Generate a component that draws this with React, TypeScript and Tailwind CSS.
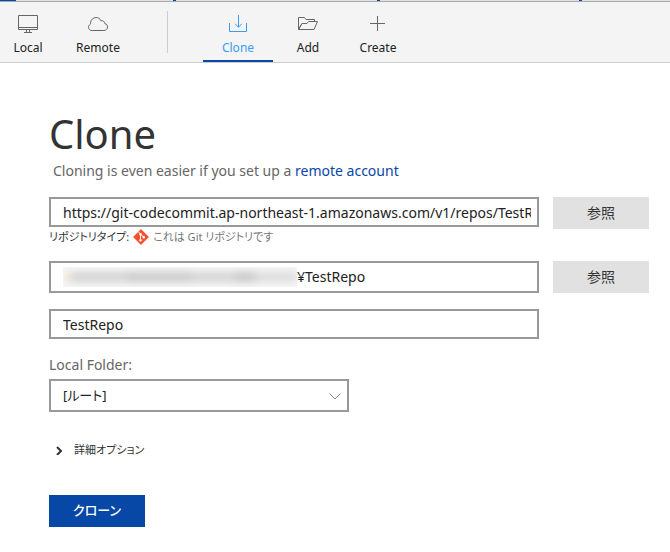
import React from "react";

const field =
  "h-[30px] min-w-0 border-2 border-[#999] bg-white pl-3 pr-1.5 text-sm text-[#222] outline-none";

// proportional kana, as in the desktop UI fonts
const kana = "[font-feature-settings:'palt']";

const icon = {
  fill: "none",
  stroke: "currentColor",
  width: 24,
  height: 24,
  viewBox: "0 0 24 24",
};

const LocalIcon = () => (
  <svg {...icon}>
    <path d="M2.5 3.5h19v14h-19zM2.5 15.5h19M10.5 17.5v2.5M13.5 17.5v2.5M8 20.5h8" />
  </svg>
);

const RemoteIcon = () => (
  <svg {...icon}>
    <path d="M6.2 18.5C3.9 18.5 2.5 17.2 2.5 15.3C2.5 13.8 3.3 12.9 4.2 12.4C4.6 12.1 4.5 11.7 4.5 10.9C4.7 7.7 7.3 5.5 10.2 5.5C12.5 5.5 14.1 6.7 14.8 8.7C17.2 8.5 18.7 9.5 18.9 11.7C20.7 12 21.5 13.3 21.5 15C21.5 17 20 18.5 17.9 18.5Z" />
  </svg>
);

const CloneIcon = () => (
  <svg {...icon}>
    <path d="M3.5 11v8.5h17V11M12.5 3v12M9.3 11.8l3.2 3.5l3.2-3.5" />
  </svg>
);

const AddIcon = () => (
  <svg {...icon}>
    <path d="M2.5 17.5v-12h6l1.5 2h8.5v2M2.5 17.5h15.5l3.5-8h-9l-1.5 2H6zM2.5 17.5l3.5-6" />
  </svg>
);

const CreateIcon = () => (
  <svg {...icon}>
    <path d="M11.5 4v15M4 11.5h15" />
  </svg>
);

const GitIcon = () => (
  <svg width="16" height="16" viewBox="0 0 16 16">
    <path
      d="M8 1l7 7-7 7-7-7z"
      fill="#f4512c"
      stroke="#f4512c"
      strokeWidth="1.4"
      strokeLinejoin="round"
    />
    <path d="M5 2.5l2.5 2.5v6M7.5 5l3.3 3.3" stroke="#fff" fill="none" />
    <circle cx="7.5" cy="5.2" r="1.2" fill="#fff" />
    <circle cx="7.5" cy="11.2" r="1.2" fill="#fff" />
    <circle cx="10.8" cy="8.2" r="1.2" fill="#fff" />
  </svg>
);

type TabProps = {
  label: string;
  active?: boolean;
  children: React.ReactNode;
};

const Tab = ({ label, active, children }: TabProps) => (
  <button
    className={`flex w-[70px] flex-col items-center gap-0.5 border-b-2 pt-2.5 ${
      active ? "border-[#0747a6] text-[#3b9cf5]" : "border-transparent text-[#666]"
    }`}
  >
    {children}
    <span className={`text-xs leading-5 ${active ? "" : "text-[#222]"}`}>
      {label}
    </span>
  </button>
);

const BrowseButton = () => (
  <button className="h-8 w-24 shrink-0 bg-[#e1e1e1] text-sm text-[#333]">
    参照
  </button>
);

const HiddenPath = () => (
  <span className="flex h-5 w-[234px] items-center overflow-hidden bg-[#f8f8f8]">
    <span className="flex h-2.5 w-full blur-xs">
      <span className="w-2 bg-[#f3e6d8]" />
      <span className="w-14 bg-[#d0d0d0]" />
      <span className="w-16 bg-[#c6c6c6]" />
      <span className="w-11 bg-[#d2d2d2]" />
      <span className="w-5 bg-[#c4c4c4]" />
      <span className="flex-1 bg-[#dadada]" />
    </span>
  </span>
);

const App = () => {
  return (
    <div className="bg-white font-['Noto_Sans','Noto_Sans_CJK_JP',sans-serif] text-[#333]">
      <div className="flex h-0.5 border-b border-[#aaa] bg-[#e1e1e1]">
        <span className="w-4 bg-[#0747a6]" />
        <span className="ml-[157px] w-[3px] bg-[#0747a6]" />
        <span className="ml-[201px] w-[3px] bg-[#0747a6]" />
        <span className="ml-[199px] w-[3px] bg-[#0747a6]" />
      </div>
      <nav className="flex h-[61px] border-b border-[#ccc] bg-[#f4f4f4]">
        <div className="-ml-[7px] flex">
          <Tab label="Local">
            <LocalIcon />
          </Tab>
          <Tab label="Remote">
            <RemoteIcon />
          </Tab>
        </div>
        <div className="mr-[35px] ml-[34px] my-[9px] w-px bg-[#ccc]" />
        <Tab label="Clone" active>
          <CloneIcon />
        </Tab>
        <Tab label="Add">
          <AddIcon />
        </Tab>
        <Tab label="Create">
          <CreateIcon />
        </Tab>
      </nav>

      <main className="pt-[45px] pr-[21px] pb-6 pl-[49px]">
        <h1 className="text-[40px] leading-[52px]">Clone</h1>
        <p className="mt-px ml-1 text-sm leading-5 text-[#666]">
          Cloning is even easier if you set up a{" "}
          <a href="#" className="text-[#0747a6]">
            remote account
          </a>
        </p>

        <div className="mt-4 flex gap-3.5">
          <div className="flex min-w-0 flex-1 flex-col">
            <input
              aria-label="Source URL"
              className={field}
              defaultValue="https://git-codecommit.ap-northeast-1.amazonaws.com/v1/repos/TestRepo"
            />
            <p className={`flex h-5 items-center gap-1 text-[11px] ${kana}`}>
              リポジトリタイプ: <GitIcon />
              <span className="text-[#777]">これは Git リポジトリです</span>
            </p>
          </div>
          <BrowseButton />
        </div>

        <div className="mt-3.5 flex gap-3.5">
          <div className="flex h-8 min-w-0 flex-1 items-center overflow-hidden border-2 border-[#999] pl-3">
            <HiddenPath />
            <input
              aria-label="Destination path"
              className="min-w-0 flex-1 text-sm text-[#222] outline-none"
              defaultValue="¥TestRepo"
            />
          </div>
          <BrowseButton />
        </div>

        <div className="mt-4 mr-[110px] flex">
          <input aria-label="Name" className={`${field} flex-1`} defaultValue="TestRepo" />
        </div>

        <label htmlFor="folder" className="mt-4 block text-sm leading-5 text-[#666]">
          Local Folder:
        </label>
        <div className="relative mt-1 w-[300px]">
          <select
            id="folder"
            className={`h-[33px] w-full appearance-none border-2 border-[#999] bg-white px-3 text-[13px] text-[#222] ${kana}`}
          >
            <option>[ルート]</option>
          </select>
          <svg
            className="pointer-events-none absolute top-3.5 right-2"
            width="12"
            height="8"
            fill="none"
            stroke="#888"
          >
            <path d="M.5 .5L6 6L11.5 .5" />
          </svg>
        </div>

        <button className={`mt-7 ml-1.5 flex h-5 items-center gap-2.5 text-[11px] ${kana}`}>
          <svg width="9" height="10" fill="none" stroke="#333" strokeWidth="2">
            <path d="M2 2l4 4-4 4" />
          </svg>
          詳細オプション
        </button>

        <button className={`mt-[35px] h-8 w-24 bg-[#0747a6] text-[13px] font-medium text-white ${kana}`}>
          クローン
        </button>
      </main>
    </div>
  );
};

export default App;
